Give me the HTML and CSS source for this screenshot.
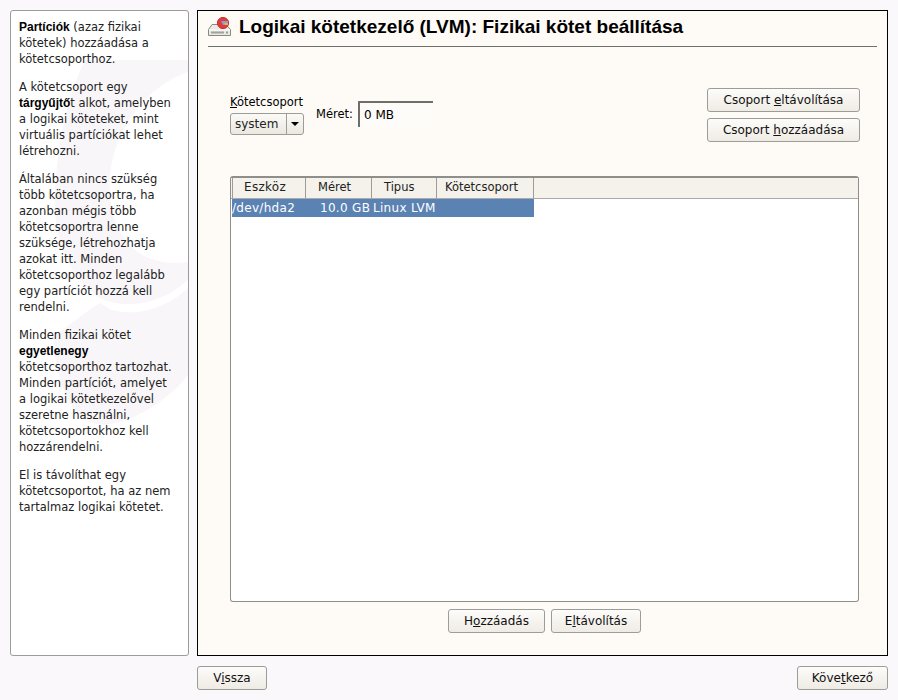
FILE: index.html
```html
<!DOCTYPE html>
<html lang="hu">
<head>
<meta charset="utf-8">
<title>Logikai kötetkezelő (LVM)</title>
<link rel="stylesheet" href="styles.css">
</head>
<body>
<div class="top">
  <aside class="help">
    <svg class="mark" viewBox="11 11 177 644" width="177" height="644" aria-hidden="true">
      <path d="M85 60 L188 60 L188 72 C150 85 115 125 110 175 C106 225 130 270 188 262 L188 280 C160 305 125 310 100 298 C70 280 52 240 55 190 C58 140 68 95 85 60Z" fill="#f9f6f9"/>
      <path d="M53 337 C70 325 85 312 100 303 L112 310 C140 318 170 305 188 288 L188 375 C160 410 110 435 85 420 C65 405 55 370 53 337Z" fill="#f9f6f9"/>
    </svg>
    <p><b>Partíciók</b> (azaz fizikai kötetek) hozzáadása a kötetcsoporthoz.</p>
    <p>A kötetcsoport egy <b>tárgyűjtő</b>t alkot, amelyben a logikai köteteket, mint virtuális partíciókat lehet létrehozni.</p>
    <p>Általában nincs szükség több kötetcsoportra, ha azonban mégis több kötetcsoportra lenne szüksége, létrehozhatja azokat itt. Minden kötetcsoporthoz legalább egy partíciót hozzá kell rendelni.</p>
    <p>Minden fizikai kötet <b>egyetlenegy</b> kötetcsoporthoz tartozhat. Minden partíciót, amelyet a logikai kötetkezelővel szeretne használni, kötetcsoportokhoz kell hozzárendelni.</p>
    <p>El is távolíthat egy kötetcsoportot, ha az nem tartalmaz logikai kötetet.</p>
  </aside>
  <main class="main">
    <header class="head">
      <svg class="icon" viewBox="0 0 23 19" width="23" height="19" aria-hidden="true">
        <path d="M4 7.5 L18 7.5 L22.5 12.5 L22.5 18.5 L0.5 18.5 L0.5 12.5 Z" fill="#ebe9e3" stroke="#8a8a84"/>
        <path d="M1 13 H22" stroke="#fff"/>
        <rect x="3" y="14.5" width="13" height="2" fill="#a2a29c"/>
        <rect x="18" y="14.5" width="2" height="2" fill="#88aa77"/>
        <circle cx="15" cy="6" r="5.6" fill="#e23a3a" stroke="#c03030"/>
        <path d="M13 4 H20 V8 H15 Z" fill="#8aa0c8"/>
        <path d="M16 6 H20 V8 H17 Z" fill="#d8b848"/>
      </svg>
      <h1>Logikai kötetkezelő (LVM): Fizikai kötet beállítása</h1>
    </header>
    <section class="controls">
      <div class="vg">
        <label><u>K</u>ötetcsoport</label>
        <div class="combo"><span class="val">system</span><span class="arrow"><i></i></span></div>
      </div>
      <div class="size">
        <span>Méret:</span>
        <div class="field">0 MB</div>
      </div>
      <div class="side-btns">
        <button class="btn wide">Csoport <u>e</u>ltávolítása</button>
        <button class="btn wide">Csoport <u>h</u>ozzáadása</button>
      </div>
    </section>
    <section class="table">
      <div class="thead">
        <span class="c1">Eszköz</span><span class="c2">Méret</span><span class="c3">Tipus</span><span class="c4">Kötetcsoport</span>
      </div>
      <div class="row">
        <span class="d1">/dev/hda2</span><span class="d2">10.0 GB</span><span class="d3">Linux LVM</span>
      </div>
    </section>
    <div class="actions">
      <button class="btn add">H<u>o</u>zzáadás</button>
      <button class="btn del">E<u>l</u>távolítás</button>
    </div>
  </main>
</div>
<footer class="foot">
  <button class="btn back">V<u>i</u>ssza</button>
  <button class="btn next">Köve<u>t</u>kező</button>
</footer>
</body>
</html>
```

FILE: styles.css
```css
* { box-sizing: border-box; }
html, body { margin: 0; height: 100%; }
body {
  width: 898px;
  height: 700px;
  overflow: hidden;
  padding: 10px 10px 0;
  background: #fbf8fb;
  color: #000;
  font: 11.5px/16px "DejaVu Sans", sans-serif;
}
.top { display: flex; gap: 8px; height: 646px; }
.help {
  position: relative;
  width: 179px;
  background: #fff;
  border: 1px solid #9c9c98;
  border-radius: 3px;
  padding: 8px 12px 8px 8px;
  overflow: hidden;
  color: #222;
}
.mark { position: absolute; left: 0; top: 0; }
.help p { position: relative; margin: 0 0 12px; }
.help b { color: #000; font: bold 12px/16px "Liberation Sans", sans-serif; }
.main {
  width: 691px;
  background: #fefbf7;
  border: 1px solid #000;
  padding: 0 10px;
  display: flex;
  flex-direction: column;
}
.head {
  flex: none;
  height: 36px;
  display: flex;
  align-items: center;
  gap: 8px;
  border-bottom: 1px solid #6e6e6a;
}
.icon { flex: none; margin-top: -4px; }
h1 {
  margin: -4px 0 0;
  font: bold 19px/20px "Liberation Sans", sans-serif;
  white-space: nowrap;
}
.controls {
  flex: none;
  display: flex;
  height: 129px;
  padding: 41px 17px 0 22px;
  align-items: flex-start;
}
.vg { margin-top: 6px; }
.vg label { display: block; line-height: 16px; }
.combo {
  display: flex;
  width: 74px;
  height: 22px;
  margin-top: 3px;
  border: 1px solid #9c9c98;
  border-radius: 3px;
  background: linear-gradient(#fbfaf6, #ece8e0);
  font-size: 12px;
}
.val { flex: 1; padding: 2px 4px; border-right: 1px solid #9c9c98; color: #222; }
.arrow { width: 16px; display: flex; align-items: center; justify-content: center; }
.arrow i { width: 0; height: 0; border: 4px solid transparent; border-top-color: #000; border-bottom: 0; }
.size { display: flex; align-items: flex-start; margin-left: 12px; margin-top: 13px; gap: 5px; }
.size span { width: 37px; margin-top: 5px; }
.field {
  width: 75px;
  height: 26px;
  padding: 4px 4px;
  border-top: 2px solid #6e6e6a;
  border-left: 2px solid #6e6e6a;
  background: #fefcf9;
  font-size: 12px;
}
.side-btns { margin-left: auto; display: flex; flex-direction: column; gap: 6px; }
.btn {
  font: 12px/16px "DejaVu Sans", sans-serif;
  color: #111;
  height: 24px;
  padding: 0;
  border: 1px solid #9c9c98;
  border-radius: 3px;
  background: linear-gradient(#fdfcfa, #efebe4);
}
.wide { width: 153px; }
.table {
  flex: none;
  margin: 0 18px 0 22px;
  height: 426px;
  background: #fff;
  border: 1px solid #8e8e8a;
  border-top-width: 2px;
  border-radius: 3px;
  padding-left: 1px;
}
.thead {
  display: flex;
  height: 21px;
  margin-left: -1px;
  padding-left: 1px;
  background: #f5f2ec;
  border-bottom: 1px solid #aaa;
}
.thead span {
  border-right: 1px solid #9c9c98;
  line-height: 19px;
  color: #222;
}
.c1 { width: 74px; border-left: 1px solid #9c9c98; padding-left: 11px; font-size: 12px; letter-spacing: 0.3px; }
.c2 { width: 66px; padding-left: 12px; }
.c3 { width: 65px; padding-left: 12px; }
.c4 { width: 97px; padding-left: 8px; }
.row {
  display: flex;
  width: 302px;
  height: 18px;
  background: #5a82b2;
  color: #fff;
  font-size: 12px;
  letter-spacing: 0.3px;
  line-height: 18px;
  white-space: nowrap;
}
.row span { display: block; }
.d1 { width: 73px; }
.d2 { width: 68px; padding-left: 15px; }
.d3 { padding-left: 0; }
.actions { display: flex; justify-content: center; gap: 6px; margin-top: 7px; padding-left: 4px; }
.add { width: 97px; }
.del { width: 90px; }
.foot {
  display: flex;
  justify-content: space-between;
  padding: 10px 0 0 187px;
}
.back { width: 70px; }
.next { width: 91px; }
```
